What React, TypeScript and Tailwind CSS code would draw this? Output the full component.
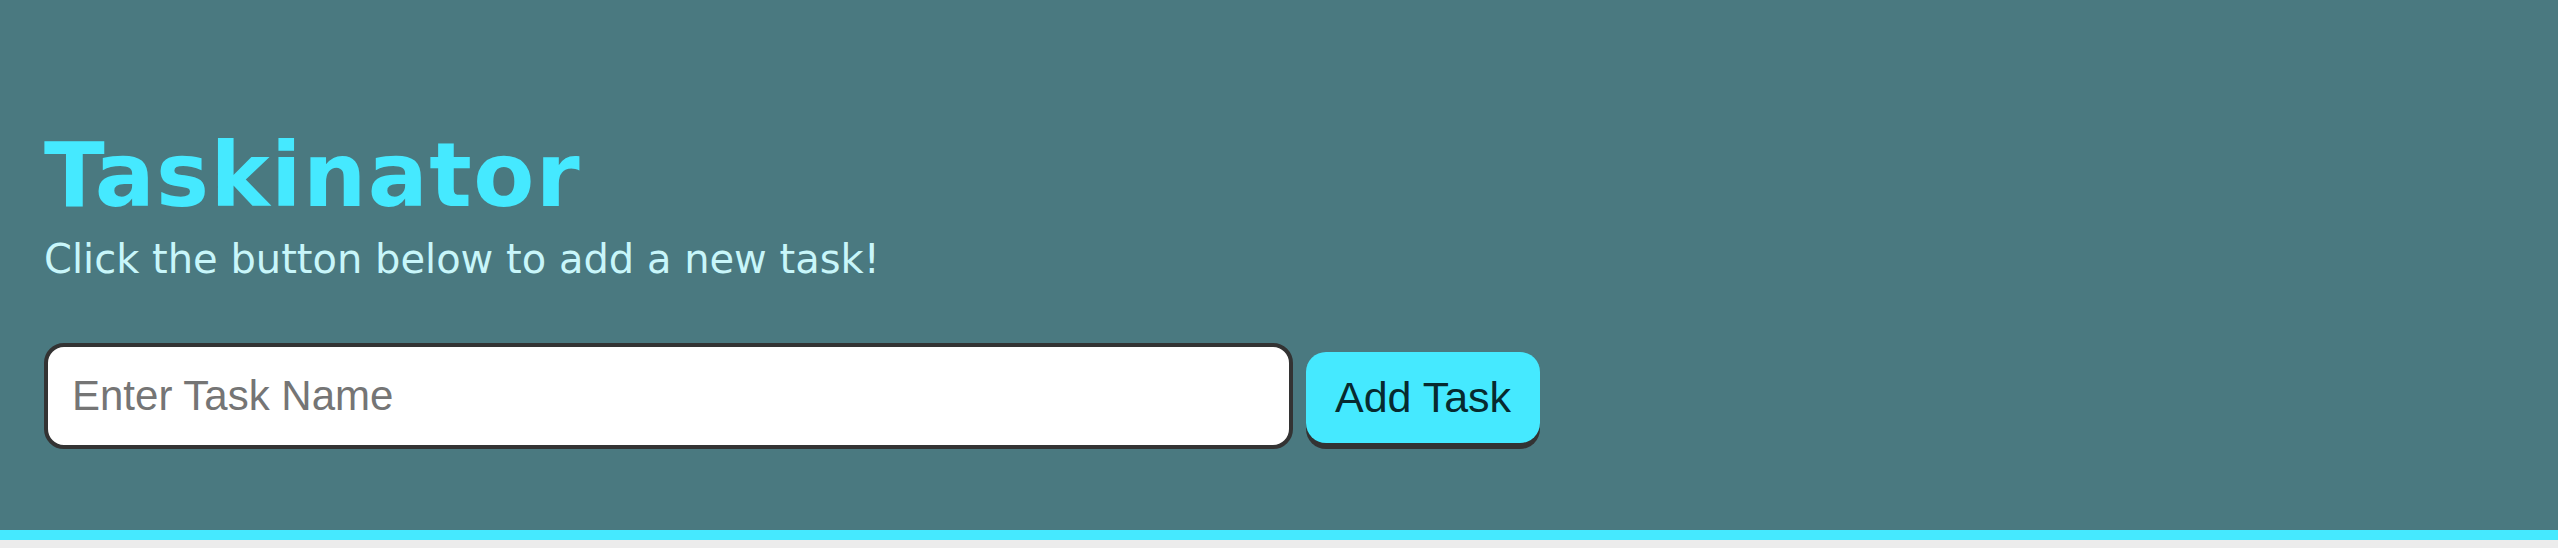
export default function App() {
  return (
    <div className="min-h-screen bg-[#ececec]">
      <header className="bg-[#4a7980] border-b-[10px] border-[#45e9ff] px-[44px] pt-[123px] pb-[81px]">
        <h1 className="text-[89px] leading-[104px] font-bold tracking-[1.4px] text-[#45e9ff] font-['DejaVu_Sans',sans-serif]">
          Taskinator
        </h1>
        <p className="mt-[9px] text-[40px] leading-[47px] text-[#c8f6fa] font-['DejaVu_Sans',sans-serif]">
          Click the button below to add a new task!
        </p>
        <form className="mt-[60px] flex items-end gap-[13px]" onSubmit={(e) => e.preventDefault()}>
          <input
            type="text"
            name="task-name"
            placeholder="Enter Task Name"
            className="h-[106px] w-[1249px] rounded-[20px] border-4 border-[#333333] bg-white px-6 text-[42px] text-black placeholder:text-[#757575] font-['Liberation_Sans',Arial,sans-serif] outline-none"
          />
          <button
            type="submit"
            className="mb-[6px] h-[91px] rounded-[20px] bg-[#45e9ff] px-[29px] text-[43px] text-[#072a2f] shadow-[0_6px_0_#333333] font-['Liberation_Sans',Arial,sans-serif]"
          >
            Add Task
          </button>
        </form>
      </header>
    </div>
  )
}
